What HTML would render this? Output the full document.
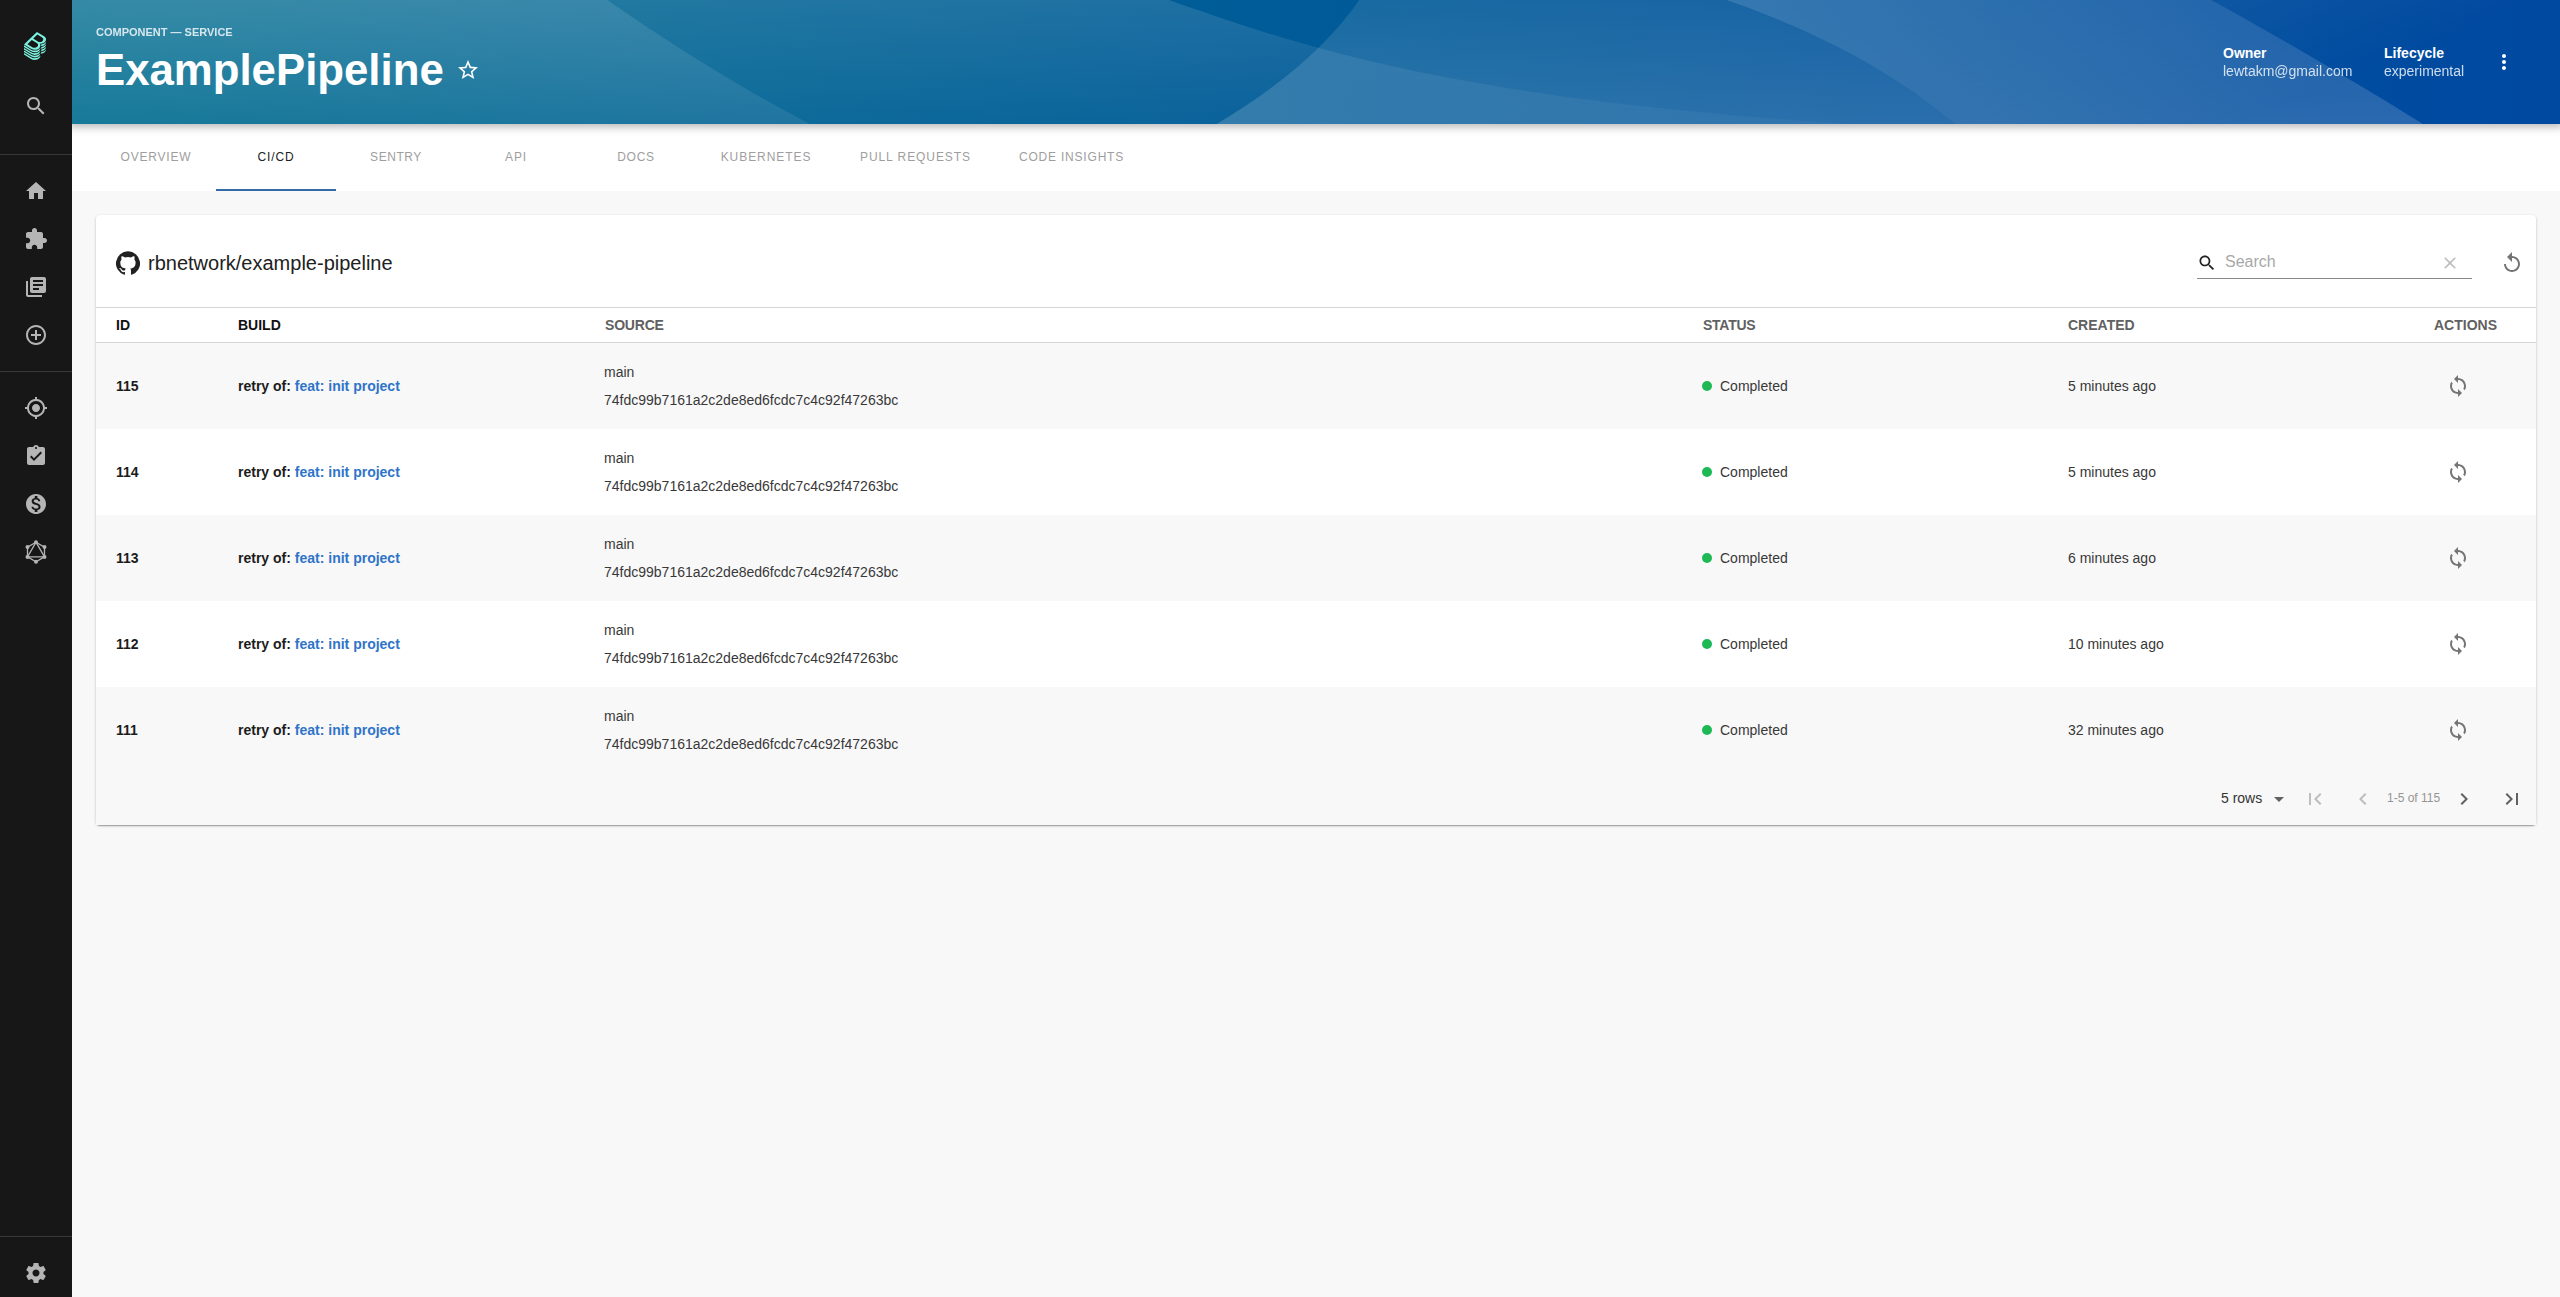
<!DOCTYPE html>
<html lang="en">
<head>
<meta charset="utf-8">
<title>ExamplePipeline | Backstage</title>
<style>
*{box-sizing:border-box;margin:0;padding:0}
html,body{width:2560px;height:1297px;overflow:hidden}
body{font-family:"Liberation Sans",sans-serif;background:#f8f8f8;color:#212121;font-size:14px;position:relative}
svg{display:block}
/* sidebar */
#sidebar{position:absolute;left:0;top:0;width:72px;height:1297px;background:#171717;z-index:5}
#sidebar .ic{position:absolute;left:24px;width:24px;height:24px;fill:#b5b5b5}
#sidebar .div{position:absolute;left:0;width:72px;height:1px;background:#383838}
/* header */
#header{position:absolute;left:72px;top:0;width:2488px;height:124px;overflow:hidden;background:linear-gradient(90deg,#006D8F,#0049A1);box-shadow:0 0 8px 3px rgba(20,20,20,.3);z-index:3;color:#fff}
#header .wave{position:absolute;left:0;top:0;width:2488px;height:124px}
#header .type{position:absolute;left:24px;top:26px;font-size:11px;font-weight:700;line-height:13px;opacity:.8;white-space:nowrap;text-transform:uppercase}
#header h1{position:absolute;left:24px;top:45px;font-size:43.76px;line-height:50px;font-weight:700;white-space:nowrap}
#header .star{position:absolute;left:384px;top:58px;width:24px;height:24px;fill:#fff}
#header .lbl{position:absolute;top:45px;font-size:14px;line-height:16px;white-space:nowrap}
#header .lbl b{display:block;font-weight:700}
#header .lbl span{display:block;margin-top:2px;opacity:.8}
#header .more{position:absolute;left:2420px;top:50px;width:24px;height:24px;fill:#fff}
/* tabs */
#tabs{position:absolute;left:72px;top:124px;width:2488px;height:67px;background:#fff;z-index:2}
#tabs .tab{position:absolute;top:0;height:67px;text-align:center;font-size:12px;line-height:67px;letter-spacing:1.1px;color:#9e9e9e;text-transform:uppercase;white-space:nowrap}
#tabs .tab.sel{color:#222}
#tabs .ind{position:absolute;left:144px;top:65px;width:120px;height:2px;background:#356aa8}
/* card */
#card{position:absolute;left:96px;top:215px;width:2440px;height:610px;background:#fff;border-radius:4px;box-shadow:0 1px 3px 0 rgba(0,0,0,.2),0 1px 1px 0 rgba(0,0,0,.14),0 2px 1px -1px rgba(0,0,0,.12)}
#card .gh{position:absolute;left:20px;top:36px;width:24px;height:24px;fill:#212121}
#card .title{position:absolute;left:52px;top:34px;font-size:20px;line-height:28px;white-space:nowrap;color:#212121}
#card .search{position:absolute;left:2101px;top:28px;width:275px;height:36px;border-bottom:1px solid #8a8a8a}
#card .search .s{position:absolute;left:0;top:10px;width:20px;height:20px;fill:#212121}
#card .search .t{position:absolute;left:28px;top:9px;font-size:16px;line-height:19px;color:#a8a8a8}
#card .search .x{position:absolute;left:243px;top:10px;width:20px;height:20px;fill:#bdbdbd}
#card .reload{position:absolute;left:2404px;top:36px;width:24px;height:24px;fill:#757575}
table{position:absolute;left:0;top:92px;width:2440px;border-collapse:separate;border-spacing:0;table-layout:fixed}
th{height:36px;border-top:1px solid #d5d5d5;border-bottom:1px solid #d5d5d5;text-align:left;padding:0 0 0 20px;font-size:14px;font-weight:700;letter-spacing:0;color:#616161;text-transform:uppercase;white-space:nowrap}
th.dark{color:#111}
td{height:86px;padding:0 0 0 20px;font-size:14px;line-height:28px;color:#383838;white-space:nowrap;vertical-align:middle}
tbody tr:nth-child(odd){background:#f8f8f8}
td.b{font-weight:700;color:#1c1c1c}
td a{color:#2f74c8;text-decoration:none}
td.st{padding-left:19px}
td .dot{display:inline-block;width:10px;height:10px;border-radius:50%;background:#1DB954;margin-right:8px;vertical-align:0.5px}
td .sync{width:24px;height:24px;fill:#757575;margin-left:12px}
#foot{position:absolute;left:0;top:558px;width:2440px;height:52px;background:#f8f8f8}
#foot .rows{position:absolute;left:2125px;top:17px;font-size:14px;line-height:16px;color:#333}
#foot .info{position:absolute;left:2291px;top:17px;font-size:12px;line-height:16px;color:#959595}
#foot svg{position:absolute;top:14px;width:24px;height:24px;fill:#616161}
#foot svg.dis{fill:#bdbdbd}
</style>
</head>
<body>
<nav id="sidebar">
  <svg class="logo" style="position:absolute;left:24px;top:32px;width:22px;height:28px;fill:#7df3e1" viewBox="0 0 337.46 428.5"><path d="M303,166.05a80.69,80.69,0,0,0,13.45-10.37c.79-.77,1.55-1.53,2.3-2.3a83.12,83.12,0,0,0,7.93-9.38A63.69,63.69,0,0,0,333,133.23a48.58,48.58,0,0,0,4.35-16.4c1.49-19.39-10-38.67-35.62-54.22L198.56,0,78.3,115.23,0,190.25l108.6,65.91a111.59,111.59,0,0,0,57.76,16.41c24.92,0,48.8-8.8,66.42-25.69,19.16-18.36,25.52-42.12,13.7-61.87a49.22,49.22,0,0,0-6.8-8.87A89.17,89.17,0,0,0,259,178.29h.15a85.08,85.08,0,0,0,31-5.79A80.88,80.88,0,0,0,303,166.05ZM202.45,225.86c-19.32,18.51-50.4,21.23-75.7,5.9L51.61,186.15l67.45-64.64,76.41,46.38C223,184.58,221.49,207.61,202.45,225.86Zm8.93-82.22-70.65-42.89L205.14,39,274.51,81.1c25.94,15.72,29.31,37,10.55,55A60.69,60.69,0,0,1,211.38,143.64Zm29.86,190c-19.57,18.75-46.17,29.09-74.88,29.09a123.73,123.73,0,0,1-64.1-18.2L0,282.52v24.67L108.6,373.1a111.6,111.6,0,0,0,57.76,16.42c24.92,0,48.8-8.81,66.42-25.69,12.88-12.34,20-27.13,19.68-41.49v-1.79A87.27,87.27,0,0,1,241.24,333.68Zm0-39c-19.57,18.75-46.17,29.08-74.88,29.08a123.81,123.81,0,0,1-64.1-18.19L0,243.53v24.68l108.6,65.91a111.6,111.6,0,0,0,57.76,16.42c24.92,0,48.8-8.81,66.42-25.69,12.88-12.34,20-27.13,19.68-41.5v-1.78A87.27,87.27,0,0,1,241.24,294.7Zm0-39c-19.57,18.76-46.17,29.09-74.88,29.09a123.81,123.81,0,0,1-64.1-18.19L0,204.55v24.68l108.6,65.91a111.59,111.59,0,0,0,57.76,16.41c24.92,0,48.8-8.8,66.42-25.68,12.88-12.35,20-27.13,19.68-41.5v-1.82A86.09,86.09,0,0,1,241.24,255.71Zm83.7,25.74a94.15,94.15,0,0,1-60.2,25.86h0V334a81.6,81.6,0,0,0,51.74-22.37c14-13.38,21.14-28.11,21-42.64v-2.19A94.92,94.92,0,0,1,324.94,281.45Zm-83.7,91.21c-19.57,18.76-46.17,29.09-74.88,29.09a123.73,123.73,0,0,1-64.1-18.2L0,321.5v24.68l108.6,65.9a111.6,111.6,0,0,0,57.76,16.42c24.92,0,48.8-8.8,66.42-25.69,12.88-12.34,20-27.13,19.68-41.49v-1.79A86.29,86.29,0,0,1,241.24,372.66ZM327,162.45c-.68.69-1.35,1.38-2.05,2.06a94.37,94.37,0,0,1-10.64,8.65,91.35,91.35,0,0,1-11.6,7,94.53,94.53,0,0,1-26.24,8.71,97.69,97.69,0,0,1-14.16,1.57c.5,1.61.9,3.25,1.25,4.9a53.27,53.27,0,0,1,1.14,12V217h.05a84.41,84.41,0,0,0,25.35-5.55,81,81,0,0,0,26.39-16.82c.8-.77,1.5-1.56,2.26-2.34a82.08,82.08,0,0,0,7.93-9.38A63.76,63.76,0,0,0,333,172.17a48.55,48.55,0,0,0,4.32-16.45c.09-1.23.2-2.47.19-3.7V150q-1.080,1.540-2.250,3.090A96.730,96.730,0,0,1,327,162.450Zm0,77.920c-.690.700-1.310,1.410-2,2.100a94.200,94.200,0,0,1-60.200,25.860h0l0,26.670h0a81.600,81.600,0,0,0,51.740-22.370A73.510,73.510,0,0,0,333,250.130a48.560,48.560,0,0,0,4.320-16.440c.090-1.240.2-2.470.190-3.710v-2.190c-.740,1.070-1.460,2.150-2.270,3.210A95.680,95.680,0,0,1,327,240.370Zm0-39c-.690.700-1.310,1.410-2,2.100a93.180,93.180,0,0,1-10.630,8.650,91.630,91.630,0,0,1-11.630,7,95.470,95.470,0,0,1-37.940,10.180h0V256h0a81.650,81.650,0,0,0,51.740-22.370c.8-.77,1.500-1.560,2.260-2.340a82.080,82.080,0,0,0,7.930-9.380A63.760,63.760,0,0,0,333,211.150a48.560,48.560,0,0,0,4.320-16.440c.090-1.240.2-2.480.190-3.710v-2.200c-.740,1.080-1.460,2.160-2.270,3.220A95.680,95.680,0,0,1,327,201.390Z"/></svg>
  <svg class="ic" style="top:94px" viewBox="0 0 24 24"><path d="M15.5 14h-.79l-.28-.27C15.41 12.59 16 11.11 16 9.5 16 5.91 13.09 3 9.5 3S3 5.910 3 9.5 5.910 16 9.5 16c1.610 0 3.090-.59 4.230-1.570l.27.28v.79l5 4.990L20.490 19l-4.990-5zm-6 0C7.010 14 5 11.990 5 9.5S7.010 5 9.5 5 14 7.010 14 9.5 11.990 14 9.5 14z"/></svg>
  <div class="div" style="top:154px"></div>
  <svg class="ic" style="top:179px" viewBox="0 0 24 24"><path d="M10 20v-6h4v6h5v-8h3L12 3 2 12h3v8z"/></svg>
  <svg class="ic" style="top:227px" viewBox="0 0 24 24"><path d="M20.5 11H19V7c0-1.100-.900-2-2-2h-4V3.500C13 2.120 11.880 1 10.500 1S8 2.120 8 3.500V5H4c-1.100 0-1.990.900-1.990 2v3.800H3.500c1.490 0 2.700 1.210 2.700 2.700s-1.210 2.700-2.700 2.700H2V20c0 1.100.900 2 2 2h3.800v-1.500c0-1.490 1.210-2.700 2.700-2.700 1.490 0 2.700 1.210 2.700 2.700V22H17c1.100 0 2-.900 2-2v-4h1.500c1.380 0 2.500-1.120 2.500-2.500S21.880 11 20.500 11z"/></svg>
  <svg class="ic" style="top:275px" viewBox="0 0 24 24"><path d="M4 6H2v14c0 1.100.900 2 2 2h14v-2H4V6zm16-4H8c-1.100 0-2 .900-2 2v12c0 1.100.900 2 2 2h12c1.100 0 2-.900 2-2V4c0-1.100-.900-2-2-2zm-1 9H9V9h10v2zm-4 4H9v-2h6v2zm4-8H9V5h10v2z"/></svg>
  <svg class="ic" style="top:323px" viewBox="0 0 24 24"><path d="M13 7h-2v4H7v2h4v4h2v-4h4v-2h-4V7zm-1-5C6.480 2 2 6.480 2 12s4.480 10 10 10 10-4.480 10-10S17.520 2 12 2zm0 18c-4.410 0-8-3.590-8-8s3.590-8 8-8 8 3.590 8 8-3.590 8-8 8z"/></svg>
  <div class="div" style="top:371px"></div>
  <svg class="ic" style="top:396px" viewBox="0 0 24 24"><path d="M12 8c-2.210 0-4 1.790-4 4s1.790 4 4 4 4-1.790 4-4-1.790-4-4-4zm8.940 3c-.46-4.170-3.770-7.480-7.940-7.940V1h-2v2.060C6.830 3.520 3.520 6.830 3.060 11H1v2h2.060c.46 4.170 3.770 7.480 7.940 7.940V23h2v-2.060c4.170-.46 7.480-3.770 7.940-7.940H23v-2h-2.060zM12 19c-3.870 0-7-3.130-7-7s3.130-7 7-7 7 3.130 7 7-3.130 7-7 7z"/></svg>
  <svg class="ic" style="top:444px" viewBox="0 0 24 24"><path d="M19 3h-4.180C14.400 1.840 13.300 1 12 1c-1.300 0-2.400.840-2.820 2H5c-1.100 0-2 .900-2 2v14c0 1.100.900 2 2 2h14c1.100 0 2-.900 2-2V5c0-1.100-.900-2-2-2zm-7 0c.550 0 1 .450 1 1s-.450 1-1 1-1-.450-1-1 .450-1 1-1zm-2 14l-4-4 1.410-1.410L10 14.170l6.590-6.590L18 9l-8 8z"/></svg>
  <svg class="ic" style="top:492px" viewBox="0 0 24 24"><path d="M12 2C6.480 2 2 6.480 2 12s4.480 10 10 10 10-4.480 10-10S17.520 2 12 2zm1.410 16.090V20h-2.670v-1.930c-1.710-.36-3.160-1.460-3.270-3.400h1.960c.1 1.050.82 1.870 2.650 1.870 1.960 0 2.400-.98 2.400-1.590 0-.83-.44-1.610-2.670-2.140-2.480-.6-4.180-1.620-4.180-3.670 0-1.720 1.390-2.840 3.110-3.210V4h2.670v1.950c1.860.45 2.790 1.860 2.850 3.390H14.300c-.05-1.110-.64-1.870-2.220-1.870-1.500 0-2.400.68-2.400 1.640 0 .84.65 1.390 2.670 1.910s4.180 1.390 4.180 3.910c-.01 1.830-1.380 2.830-3.120 3.160z"/></svg>
  <svg class="ic" style="top:540px" viewBox="0 0 24 24"><g fill="none" stroke="#b5b5b5" stroke-width="1.3"><path d="M12 2.200L20.490 7.100V16.900L12 21.800L3.510 16.900V7.100Z"/><path d="M12 2.200L20.490 16.900H3.510Z"/></g><circle cx="12" cy="2.200" r="2"/><circle cx="20.490" cy="7.100" r="2"/><circle cx="20.490" cy="16.900" r="2"/><circle cx="12" cy="21.800" r="2"/><circle cx="3.510" cy="16.900" r="2"/><circle cx="3.510" cy="7.100" r="2"/></svg>
  <div class="div" style="top:1236px"></div>
  <svg class="ic" style="top:1261px" viewBox="0 0 24 24"><path d="M19.430 12.980c.04-.32.07-.64.07-.98s-.03-.66-.07-.98l2.110-1.650c.19-.15.24-.42.12-.64l-2-3.460c-.12-.22-.39-.3-.61-.22l-2.490 1c-.52-.4-1.080-.73-1.690-.98l-.38-2.650C14.460 2.180 14.250 2 14 2h-4c-.25 0-.46.180-.49.420l-.38 2.650c-.61.250-1.170.590-1.690.980l-2.490-1c-.23-.09-.49 0-.61.220l-2 3.460c-.13.220-.07.490.12.640l2.110 1.650c-.04.320-.07.650-.07.980s.03.660.07.980l-2.110 1.650c-.19.150-.24.420-.12.640l2 3.460c.12.220.39.300.61.220l2.490-1c.52.400 1.080.730 1.690.980l.38 2.650c.03.240.24.420.49.420h4c.25 0 .46-.18.490-.42l.38-2.650c.61-.25 1.170-.59 1.690-.98l2.490 1c.23.090.49 0 .61-.22l2-3.460c.12-.22.070-.49-.12-.64l-2.110-1.650zM12 15.500c-1.930 0-3.500-1.570-3.500-3.500s1.570-3.500 3.500-3.500 3.500 1.570 3.500 3.500-1.570 3.500-3.500 3.500z"/></svg>
</nav>

<header id="header">
  <svg class="wave" viewBox="0 0 1368 400" preserveAspectRatio="xMidYMid slice" fill="none">
    <defs>
      <linearGradient id="p0" x1="602" x2="1093.500" y1="-960.500" y2="272" gradientUnits="userSpaceOnUse"><stop stop-color="#fff"/><stop offset="1" stop-color="#fff" stop-opacity="0"/></linearGradient>
      <linearGradient id="p1" x1="482" x2="480" y1="1058.500" y2="70.500" gradientUnits="userSpaceOnUse"><stop stop-color="#fff"/><stop offset="1" stop-color="#fff" stop-opacity="0"/></linearGradient>
      <linearGradient id="p2" x1="424" x2="446.100" y1="-587.500" y2="274.600" gradientUnits="userSpaceOnUse"><stop stop-color="#fff"/><stop offset="1" stop-color="#fff" stop-opacity="0"/></linearGradient>
      <linearGradient id="p3" x1="587" x2="349" y1="-1120.500" y2="341" gradientUnits="userSpaceOnUse"><stop stop-color="#fff"/><stop offset="1" stop-color="#fff" stop-opacity="0"/></linearGradient>
      <mask id="wm" width="1368" height="401" x="0" y="0" maskUnits="userSpaceOnUse">
        <path fill="url(#p0)" d="M437 116C223 116 112 0 112 0h1256v400c-82 0-225-21-282-109-112-175-436-175-649-175z"/>
        <path fill="url(#p1)" d="M1368 400V282C891-29 788 40 711 161 608 324 121 372 0 361v39h1368z"/>
        <path fill="url(#p2)" d="M1368 244v156H0V94c92-24 198-46 375 0l135 41c176 51 195 109 858 109z"/>
        <path fill="url(#p3)" d="M1252 400h116c-14-7-35-14-116-16-663-14-837-128-1013-258l-85-61C98 28 46 8 0 0v400h1252z"/>
      </mask>
    </defs>
    <g mask="url(#wm)"><path fill="#fff" d="M-172-98h1671v601H-172z"/></g>
  </svg>
  <p class="type">Component — Service</p>
  <h1>ExamplePipeline</h1>
  <svg class="star" viewBox="0 0 24 24"><path d="M22 9.240l-7.190-.62L12 2 9.190 8.630 2 9.240l5.460 4.730L5.820 21 12 17.270 18.180 21l-1.630-7.030L22 9.240zM12 15.400l-3.760 2.270 1-4.280-3.320-2.880 4.380-.38L12 6.100l1.710 4.040 4.380.38-3.320 2.880 1 4.280L12 15.400z"/></svg>
  <div class="lbl" style="left:2151px"><b>Owner</b><span>lewtakm@gmail.com</span></div>
  <div class="lbl" style="left:2312px"><b>Lifecycle</b><span>experimental</span></div>
  <svg class="more" viewBox="0 0 24 24"><path d="M12 8c1.100 0 2-.900 2-2s-.900-2-2-2-2 .900-2 2 .900 2 2 2zm0 2c-1.100 0-2 .900-2 2s.900 2 2 2 2-.900 2-2-.900-2-2-2zm0 6c-1.100 0-2 .900-2 2s.900 2 2 2 2-.900 2-2-.900-2-2-2z"/></svg>
</header>

<div id="tabs">
  <div class="tab" style="left:24px;width:120px;letter-spacing:0.8px">Overview</div>
  <div class="tab sel" style="left:144px;width:120px;letter-spacing:0.85px">CI/CD</div>
  <div class="tab" style="left:264px;width:120px;letter-spacing:0.55px">Sentry</div>
  <div class="tab" style="left:384px;width:120px;letter-spacing:0.85px">API</div>
  <div class="tab" style="left:504px;width:120px;letter-spacing:0.7px">Docs</div>
  <div class="tab" style="left:624px;width:140px;letter-spacing:0.93px">Kubernetes</div>
  <div class="tab" style="left:764px;width:159px;letter-spacing:0.93px">Pull Requests</div>
  <div class="tab" style="left:923px;width:153px;letter-spacing:0.8px">Code Insights</div>
  <div class="ind"></div>
</div>

<main id="card">
  <svg class="gh" viewBox="0 0 24 24"><path d="M12 .3a12 12 0 0 0-3.800 23.400c.600.100.800-.300.800-.600v-2c-3.300.700-4-1.600-4-1.600-.600-1.400-1.400-1.800-1.400-1.800-1-.700.100-.700.100-.700 1.200 0 1.900 1.200 1.900 1.200 1 1.800 2.800 1.300 3.500 1 0-.800.400-1.300.700-1.600-2.700-.300-5.500-1.300-5.500-6 0-1.200.500-2.300 1.300-3.100-.200-.400-.600-1.600 0-3.200 0 0 1-.300 3.400 1.200a11.500 11.500 0 0 1 6 0c2.300-1.500 3.300-1.200 3.300-1.200.600 1.600.200 2.800 0 3.200.900.800 1.300 1.900 1.300 3.200 0 4.600-2.800 5.600-5.500 5.900.500.400.900 1 .900 2.200v3.300c0 .300.100.700.800.600A12 12 0 0 0 12 .3"/></svg>
  <div class="title">rbnetwork/example-pipeline</div>
  <div class="search">
    <svg class="s" viewBox="0 0 24 24"><path d="M15.5 14h-.79l-.28-.27C15.410 12.590 16 11.110 16 9.500 16 5.910 13.090 3 9.500 3S3 5.910 3 9.500 5.910 16 9.500 16c1.610 0 3.090-.590 4.230-1.570l.27.28v.79l5 4.990L20.490 19l-4.990-5zm-6 0C7.010 14 5 11.990 5 9.500S7.010 5 9.500 5 14 7.010 14 9.500 11.990 14 9.500 14z"/></svg>
    <span class="t">Search</span>
    <svg class="x" viewBox="0 0 24 24"><path d="M19 6.410L17.590 5 12 10.590 6.410 5 5 6.410 10.590 12 5 17.590 6.410 19 12 13.410 17.590 19 19 17.590 13.410 12z"/></svg>
  </div>
  <svg class="reload" viewBox="0 0 24 24"><path d="M12 5V1L7 6l5 5V7c3.310 0 6 2.690 6 6s-2.690 6-6 6-6-2.690-6-6H4c0 4.420 3.580 8 8 8s8-3.580 8-8-3.580-8-8-8z"/></svg>
  <table>
    <colgroup><col style="width:122px"><col style="width:366px"><col style="width:1099px"><col style="width:365px"><col style="width:366px"><col style="width:122px"></colgroup>
    <thead><tr><th class="dark" style="letter-spacing:0px">ID</th><th class="dark" style="letter-spacing:0px">Build</th><th style="letter-spacing:-0.2px;padding-left:21px">Source</th><th style="letter-spacing:-0.25px">Status</th><th style="letter-spacing:0px">Created</th><th style="letter-spacing:0px">Actions</th></tr></thead>
    <tbody>
      <tr><td class="b">115</td><td class="b">retry of: <a>feat: init project</a></td><td>main<br>74fdc99b7161a2c2de8ed6fcdc7c4c92f47263bc</td><td class="st"><span class="dot"></span>Completed</td><td>5 minutes ago</td><td><svg class="sync" viewBox="0 0 24 24"><path d="M12 4V1L8 5l4 4V6c3.310 0 6 2.690 6 6 0 1.010-.250 1.970-.700 2.800l1.460 1.460C19.540 15.030 20 13.570 20 12c0-4.420-3.580-8-8-8zm0 14c-3.310 0-6-2.690-6-6 0-1.010.250-1.970.700-2.800L5.240 7.740C4.460 8.970 4 10.430 4 12c0 4.420 3.580 8 8 8v3l4-4-4-4v3z"/></svg></td></tr>
      <tr><td class="b">114</td><td class="b">retry of: <a>feat: init project</a></td><td>main<br>74fdc99b7161a2c2de8ed6fcdc7c4c92f47263bc</td><td class="st"><span class="dot"></span>Completed</td><td>5 minutes ago</td><td><svg class="sync" viewBox="0 0 24 24"><path d="M12 4V1L8 5l4 4V6c3.310 0 6 2.690 6 6 0 1.010-.250 1.970-.700 2.800l1.460 1.460C19.540 15.030 20 13.570 20 12c0-4.420-3.580-8-8-8zm0 14c-3.310 0-6-2.690-6-6 0-1.010.250-1.970.700-2.800L5.240 7.740C4.460 8.970 4 10.430 4 12c0 4.420 3.580 8 8 8v3l4-4-4-4v3z"/></svg></td></tr>
      <tr><td class="b">113</td><td class="b">retry of: <a>feat: init project</a></td><td>main<br>74fdc99b7161a2c2de8ed6fcdc7c4c92f47263bc</td><td class="st"><span class="dot"></span>Completed</td><td>6 minutes ago</td><td><svg class="sync" viewBox="0 0 24 24"><path d="M12 4V1L8 5l4 4V6c3.310 0 6 2.690 6 6 0 1.010-.250 1.970-.700 2.800l1.460 1.460C19.540 15.030 20 13.570 20 12c0-4.420-3.580-8-8-8zm0 14c-3.310 0-6-2.690-6-6 0-1.010.250-1.970.700-2.800L5.240 7.740C4.460 8.970 4 10.430 4 12c0 4.420 3.580 8 8 8v3l4-4-4-4v3z"/></svg></td></tr>
      <tr><td class="b">112</td><td class="b">retry of: <a>feat: init project</a></td><td>main<br>74fdc99b7161a2c2de8ed6fcdc7c4c92f47263bc</td><td class="st"><span class="dot"></span>Completed</td><td>10 minutes ago</td><td><svg class="sync" viewBox="0 0 24 24"><path d="M12 4V1L8 5l4 4V6c3.310 0 6 2.690 6 6 0 1.010-.250 1.970-.700 2.800l1.460 1.460C19.540 15.030 20 13.570 20 12c0-4.420-3.580-8-8-8zm0 14c-3.310 0-6-2.690-6-6 0-1.010.250-1.970.700-2.800L5.240 7.740C4.460 8.970 4 10.430 4 12c0 4.420 3.580 8 8 8v3l4-4-4-4v3z"/></svg></td></tr>
      <tr><td class="b">111</td><td class="b">retry of: <a>feat: init project</a></td><td>main<br>74fdc99b7161a2c2de8ed6fcdc7c4c92f47263bc</td><td class="st"><span class="dot"></span>Completed</td><td>32 minutes ago</td><td><svg class="sync" viewBox="0 0 24 24"><path d="M12 4V1L8 5l4 4V6c3.310 0 6 2.690 6 6 0 1.010-.250 1.970-.700 2.800l1.460 1.460C19.540 15.030 20 13.570 20 12c0-4.420-3.580-8-8-8zm0 14c-3.310 0-6-2.690-6-6 0-1.010.250-1.970.700-2.800L5.240 7.740C4.460 8.970 4 10.430 4 12c0 4.420 3.580 8 8 8v3l4-4-4-4v3z"/></svg></td></tr>
    </tbody>
  </table>
  <div id="foot">
    <span class="rows">5 rows</span>
    <svg style="left:2171px" viewBox="0 0 24 24"><path d="M7 10l5 5 5-5z"/></svg>
    <svg class="dis" style="left:2207px" viewBox="0 0 24 24"><path d="M18.410 16.590L13.820 12l4.590-4.590L17 6l-6 6 6 6zM6 6h2v12H6z"/></svg>
    <svg class="dis" style="left:2255px" viewBox="0 0 24 24"><path d="M15.410 7.410L14 6l-6 6 6 6 1.410-1.410L10.830 12z"/></svg>
    <span class="info">1-5 of 115</span>
    <svg style="left:2356px" viewBox="0 0 24 24"><path d="M10 6L8.590 7.410 13.170 12l-4.580 4.590L10 18l6-6z"/></svg>
    <svg style="left:2404px" viewBox="0 0 24 24"><path d="M5.590 7.410L10.180 12l-4.590 4.590L7 18l6-6-6-6zM16 6h2v12h-2z"/></svg>
  </div>
</main>
</body>
</html>
